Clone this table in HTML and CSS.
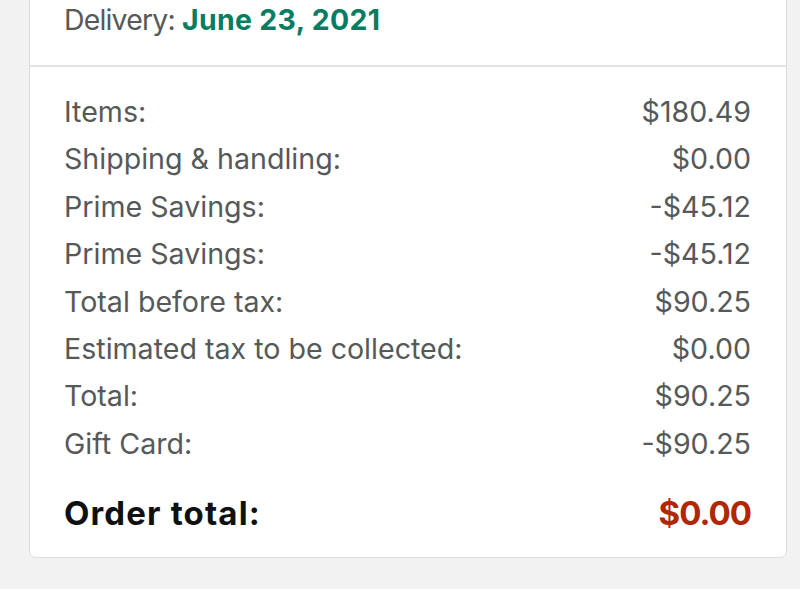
FILE: index.html
```html
<!DOCTYPE html>
<html>
<head>
<meta charset="utf-8">
<link rel="stylesheet" href="styles.css">
</head>
<body>
<div class="card">
  <div class="delivery"><span class="label">Delivery: </span><span class="date">June 23, 2021</span></div>
  <div class="summary">
    <div class="row"><span>Items:</span><span>$180.49</span></div>
    <div class="row"><span>Shipping &amp; handling:</span><span>$0.00</span></div>
    <div class="row"><span>Prime Savings:</span><span>-$45.12</span></div>
    <div class="row"><span>Prime Savings:</span><span>-$45.12</span></div>
    <div class="row"><span>Total before tax:</span><span>$90.25</span></div>
    <div class="row"><span>Estimated tax to be collected:</span><span>$0.00</span></div>
    <div class="row"><span>Total:</span><span>$90.25</span></div>
    <div class="row"><span>Gift Card:</span><span>-$90.25</span></div>
    <div class="row total"><span class="total-label">Order total:</span><span class="amount">$0.00</span></div>
  </div>
</div>
</body>
</html>
```
FILE: styles.css
```css
html, body {
  margin: 0;
  padding: 0;
}
body {
  background: #f2f2f2;
  font-family: Inter, "Noto Sans", sans-serif;
  color: #565959;
  height: 589px;
  overflow: hidden;
}
.card {
  margin: -31px 0 0 29px;
  width: 756px;
  background: #fff;
  border: 1px solid #dcdcdc;
  border-radius: 0 0 7px 7px;
}
.delivery {
  padding: 30px 34px 25px;
  font-size: 28.4px;
  line-height: 40px;
}
.delivery .label {
  letter-spacing: -0.8px;
}
.date {
  color: #067d62;
  font-weight: 700;
  letter-spacing: 0.35px;
}
.summary {
  border-top: 2px solid #e3e3e3;
  padding: 21px 35px 20px 34px;
}
.row {
  display: flex;
  justify-content: space-between;
  font-size: 28.6px;
  line-height: 47.4px;
}
.row.total {
  margin-top: 22px;
  font-size: 33px;
  line-height: 48px;
  font-weight: 700;
  color: #0f1111;
}
.total-label {
  letter-spacing: 1.15px;
}
.amount {
  color: #b12704;
  letter-spacing: -1px;
}
```
